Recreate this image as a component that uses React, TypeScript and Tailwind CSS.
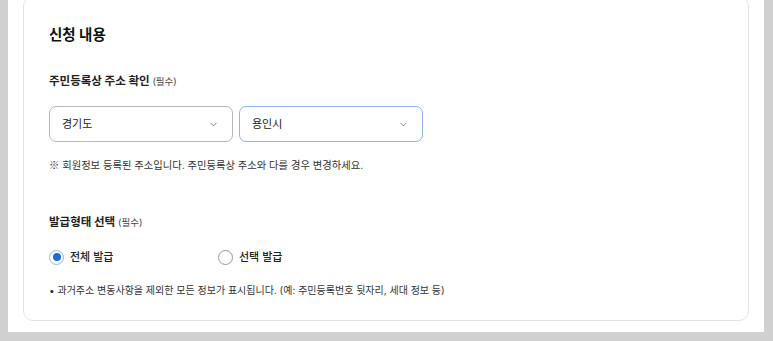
import { ChevronDown } from "lucide-react"

function SelectBox({ value, focused }: { value: string; focused?: boolean }) {
  return (
    <div
      className={`flex h-[36px] w-[184px] items-center justify-between rounded-[7px] border bg-white pl-[12px] pr-[13px] ${
        focused ? "border-[#8fb4ee]" : "border-[#b8b8b8]"
      }`}
    >
      <span className="text-[11px] text-[#222]">{value}</span>
      <ChevronDown className="h-[11px] w-[11px] text-[#555]" strokeWidth={1.6} />
    </div>
  )
}

function Radio({ label, checked }: { label: string; checked?: boolean }) {
  return (
    <label className="flex items-center gap-[6px]">
      <span
        className={`flex h-[15px] w-[15px] items-center justify-center rounded-full border bg-white ${
          checked ? "border-[#8fb4ee]" : "border-[#9a9a9a]"
        }`}
      >
        {checked ? <span className="h-[8px] w-[8px] rounded-full bg-[#1f6ae0]" /> : null}
      </span>
      <span className="text-[11px] font-medium text-[#222]">{label}</span>
    </label>
  )
}

export default function App() {
  return (
    <div
      className="h-[341px] w-[773px] overflow-hidden bg-[#d0d0d0] pb-[9px] pl-[8px] pr-[9px]"
      style={{ fontFamily: '"Inter", "Noto Sans CJK KR", sans-serif' }}
    >
      <div className="h-full overflow-hidden bg-white px-[15px] pb-[11px]">
        <div className="-mt-[4px] h-[325px] rounded-[10px] border border-[#e3e3e3] bg-white pl-[25px] pt-[28px]">
          <h2 className="text-[14.5px] font-bold leading-[20px] text-[#111]">신청 내용</h2>

          <p className="mt-[28px] text-[11.5px] font-bold leading-[16px] text-[#222]">
            주민등록상 주소 확인 <span className="text-[9.5px] font-normal text-[#444]">(필수)</span>
          </p>

          <div className="mt-[16px] flex gap-[6px]">
            <SelectBox value="경기도" />
            <SelectBox value="용인시" focused />
          </div>

          <p className="mt-[16px] text-[10.3px] leading-[14px] text-[#333]">
            <span style={{ fontFamily: '"Noto Sans CJK KR", sans-serif' }}>※</span> 회원정보 등록된 주소입니다. 주민등록상 주소와 다를 경우 변경하세요.
          </p>

          <p className="mt-[42px] text-[11.5px] font-bold leading-[16px] text-[#222]">
            발급형태 선택 <span className="text-[9.5px] font-normal text-[#444]">(필수)</span>
          </p>

          <div className="mt-[18px] flex items-center">
            <div className="w-[169px]">
              <Radio label="전체 발급" checked />
            </div>
            <Radio label="선택 발급" />
          </div>

          <p className="mt-[17px] text-[10px] leading-[14px] text-[#333]">
            • 과거주소 변동사항을 제외한 모든 정보가 표시됩니다. (예: 주민등록번호 뒷자리, 세대 정보 등)
          </p>
        </div>
      </div>
    </div>
  )
}
